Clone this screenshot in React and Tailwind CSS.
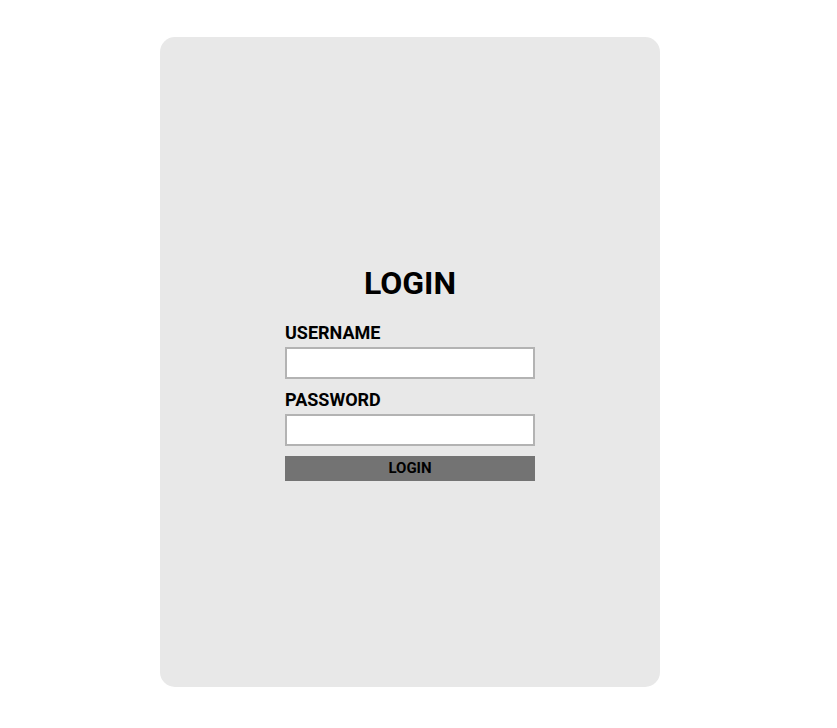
export default function App() {
  return (
    <div className="min-h-screen bg-white pt-[37px] pl-[160px]" style={{ fontFamily: 'Roboto, "Liberation Sans", sans-serif' }}>
      <div className="w-[500px] h-[650px] rounded-[15px] bg-[#e8e8e8] flex flex-col items-center justify-center">
        <form className="w-[250px] flex flex-col" onSubmit={(e) => e.preventDefault()}>
          <h1 className="text-[32px] leading-[37px] font-bold text-black text-center mt-[21px] mb-[20px]">LOGIN</h1>
          <label className="text-[18px] leading-[21px] font-bold text-black mb-[4px]">USERNAME</label>
          <input type="text" className="h-[32px] w-full bg-white border-2 border-[#b3b3b3] outline-none px-1" />
          <label className="text-[18px] leading-[21px] font-bold text-black mt-[10px] mb-[4px]">PASSWORD</label>
          <input type="password" className="h-[32px] w-full bg-white border-2 border-[#b3b3b3] outline-none px-1" />
          <button type="submit" className="mt-[10px] h-[25px] w-full bg-[#737373] text-black text-[15px] font-bold leading-[25px]">LOGIN</button>
        </form>
      </div>
    </div>
  )
}
